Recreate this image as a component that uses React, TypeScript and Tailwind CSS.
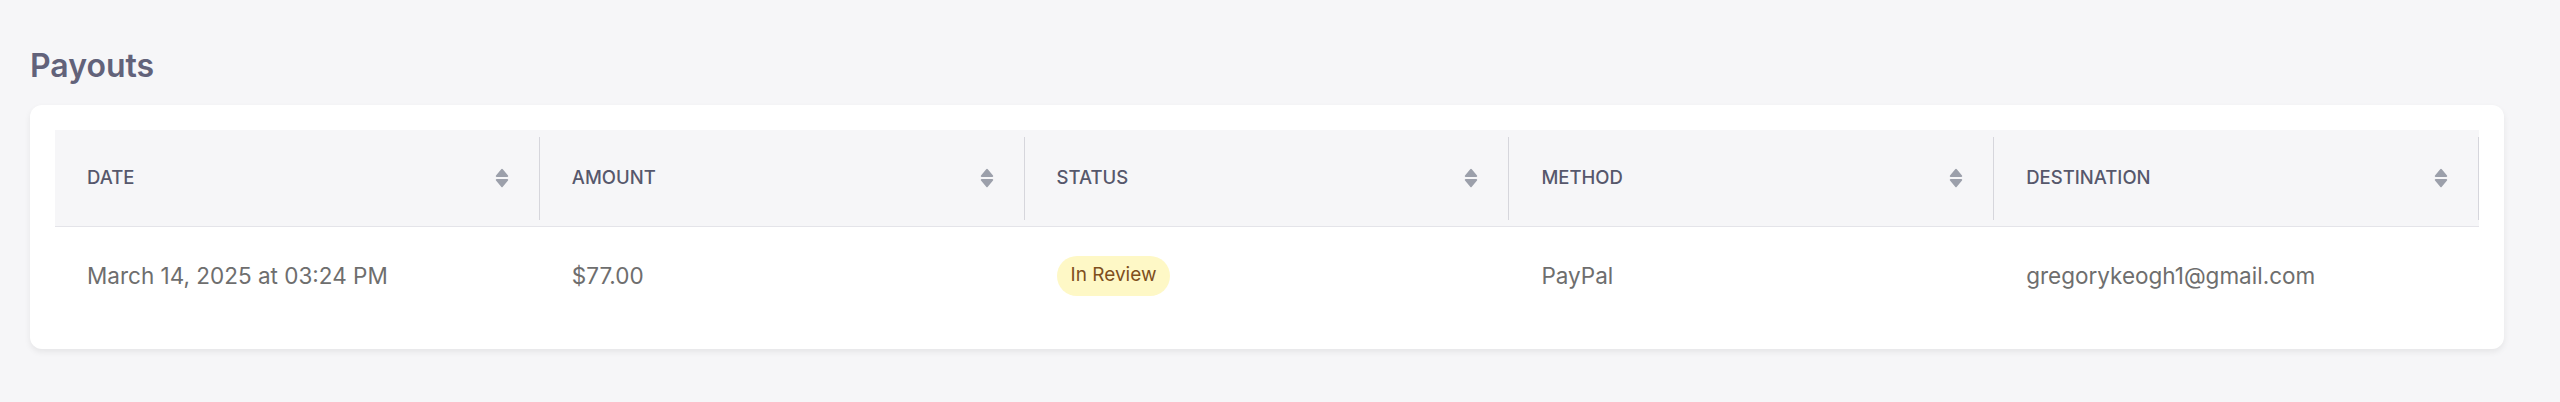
const COLUMNS = ["Date", "Amount", "Status", "Method", "Destination"];

const FONT = "font-['Inter','Noto_Sans',sans-serif]";

export default function App() {
  return (
    <div className={`min-h-[402px] bg-[#f6f6f8] pt-[42px] pl-[30px] pr-[56px] ${FONT}`}>
      <h1 className="mb-[16px] h-[47px] text-[32px] leading-[47px] font-semibold text-[#62627a]">Payouts</h1>

      <div className="rounded-[12px] bg-white p-[25px] shadow-[0_3px_6px_rgba(0,0,0,0.07)]">
        <div className="grid grid-cols-5 border-b border-[#e4e4e9] bg-[#f6f6f8]">
          {COLUMNS.map((label) => (
            <div key={label} className="flex h-[96px] items-center">
              <div className="flex flex-1 items-center justify-between pl-8 pr-[30px]">
                <span className="text-[18.5px] font-medium uppercase text-[#56586c]">{label}</span>
                <SortIcon />
              </div>
              <div className="h-[83px] w-px bg-[#d6d6dc]" />
            </div>
          ))}
        </div>

        <div className="grid h-[97px] grid-cols-5 items-center text-[22.5px] text-[#6e6e6e]">
          <div className="pl-8">March 14, 2025 at 03:24 PM</div>
          <div className="pl-8">$77.00</div>
          <div className="pl-8">
            <span className="inline-flex h-[40px] items-center rounded-full bg-[#fef8c6] px-[14px] text-[19px] text-[#7f4f1d]">
              In Review
            </span>
          </div>
          <div className="pl-8">PayPal</div>
          <div className="pl-8">gregorykeogh1@gmail.com</div>
        </div>
      </div>
    </div>
  );
}

function SortIcon() {
  return (
    <svg width="14" height="20" viewBox="0 0 14 20" className="shrink-0 text-[#9ca0ab]" fill="currentColor" aria-hidden>
      <path d="M6.2 1.2a1 1 0 0 1 1.6 0l5.2 6.4c.5.6.1 1.4-.7 1.4H1.7c-.8 0-1.2-.8-.7-1.4z" />
      <path d="M6.2 18.8a1 1 0 0 0 1.6 0l5.2-6.4c.5-.6.1-1.4-.7-1.4H1.7c-.8 0-1.2.8-.7 1.4z" />
    </svg>
  );
}
